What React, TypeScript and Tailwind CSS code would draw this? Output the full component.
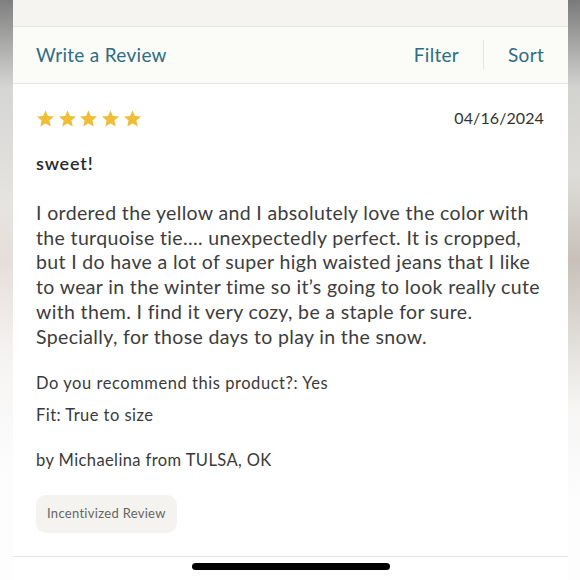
import React from "react";

const Star = () => (
  <svg width="19" height="19" viewBox="0 0 24 24" className="shrink-0">
    <path
      d="M12 1.8l3.05 7.1 7.7.66-5.84 5.06 1.76 7.53L12 18.2l-6.67 3.95 1.76-7.53L1.25 9.56l7.7-.66z"
      fill="#efbd36"
    />
  </svg>
);

const lines = [
  "I ordered the yellow and I absolutely love the color with",
  "the turquoise tie…. unexpectedly perfect. It is cropped,",
  "but I do have a lot of super high waisted jeans that I like",
  "to wear in the winter time so it’s going to look really cute",
  "with them. I find it very cozy, be a staple for sure.",
  "Specially, for those days to play in the snow.",
];

export default function App() {
  const font = { fontFamily: "Lato, 'Open Sans', sans-serif" };
  return (
    <div className="w-[580px] h-[580px] flex bg-white overflow-hidden" style={font}>
      <div className="w-[13px] h-full bg-[linear-gradient(to_bottom,#7f7f7f_0%,#d5d5d3_15%,#e6e4e1_35%,#e6dedb_45%,#f6f4f3_62%,#fcfcfc_80%,#fdfdfd_100%)]" />
      <div className="flex-1 flex flex-col h-full">
        <div className="h-[27px] bg-[#f5f4f1] border-b border-[#e6e5e1]" />
        <div className="h-[57px] bg-[#fbfbf8] border-b border-[#e6e5e1] flex items-center pl-[23px] pr-[24px] text-[#2e6d84] text-[19px] tracking-[0.3px]">
          <span>Write a Review</span>
          <span className="ml-auto">Filter</span>
          <div className="w-px h-[30px] bg-[#e6e5e1] mx-[24px]" />
          <span>Sort</span>
        </div>
        <div className="flex flex-col pl-[23px] pr-[20px]">
          <div className="flex items-center justify-between mt-[24px] h-[20px]">
            <div className="flex gap-[2.7px]">
              <Star />
              <Star />
              <Star />
              <Star />
              <Star />
            </div>
            <span className="text-[16px] text-[#333] tracking-[0.1px] pr-[4px]">04/16/2024</span>
          </div>
          <div className="mt-[23px] text-[18px] font-semibold text-[#2a2a2a] tracking-[0.8px] leading-[24px]">sweet!</div>
          <p className="mt-[26px] text-[19.5px] leading-[24.7px] text-[#3d3d3d] tracking-[0.35px] whitespace-nowrap">
            {lines.map((l, i) => (
              <React.Fragment key={i}>
                {l}
                {i < lines.length - 1 && <br />}
              </React.Fragment>
            ))}
          </p>
          <div className="mt-[24px] text-[16.5px] text-[#3a3a3a] leading-[20px] tracking-[0.55px]">Do you recommend this product?: Yes</div>
          <div className="mt-[12px] text-[16.5px] text-[#3a3a3a] leading-[20px] tracking-[0.45px]">Fit: True to size</div>
          <div className="mt-[24px] text-[16.5px] text-[#3a3a3a] leading-[22px] tracking-[0.4px]">by Michaelina from TULSA, OK</div>
          <div className="mt-[24px] self-start h-[38px] px-[11px] rounded-[10px] bg-[#f4f3ef] flex items-center text-[13px] text-[#666] tracking-[0.3px]">
            Incentivized Review
          </div>
        </div>
        <div className="mt-auto h-[24px] border-t border-[#e4e4e2] flex justify-center pt-[6px] bg-white">
          <div className="w-[198px] h-[7px] rounded-full bg-black" />
        </div>
      </div>
      <div className="w-[12px] h-full bg-[linear-gradient(to_bottom,#7a7a7a_0%,#d2d2d0_15%,#dedcd8_30%,#c8c0b9_45%,#e0dcd8_58%,#f6f5f4_70%,#fcfcfc_85%,#fdfdfd_100%)]" />
    </div>
  );
}
